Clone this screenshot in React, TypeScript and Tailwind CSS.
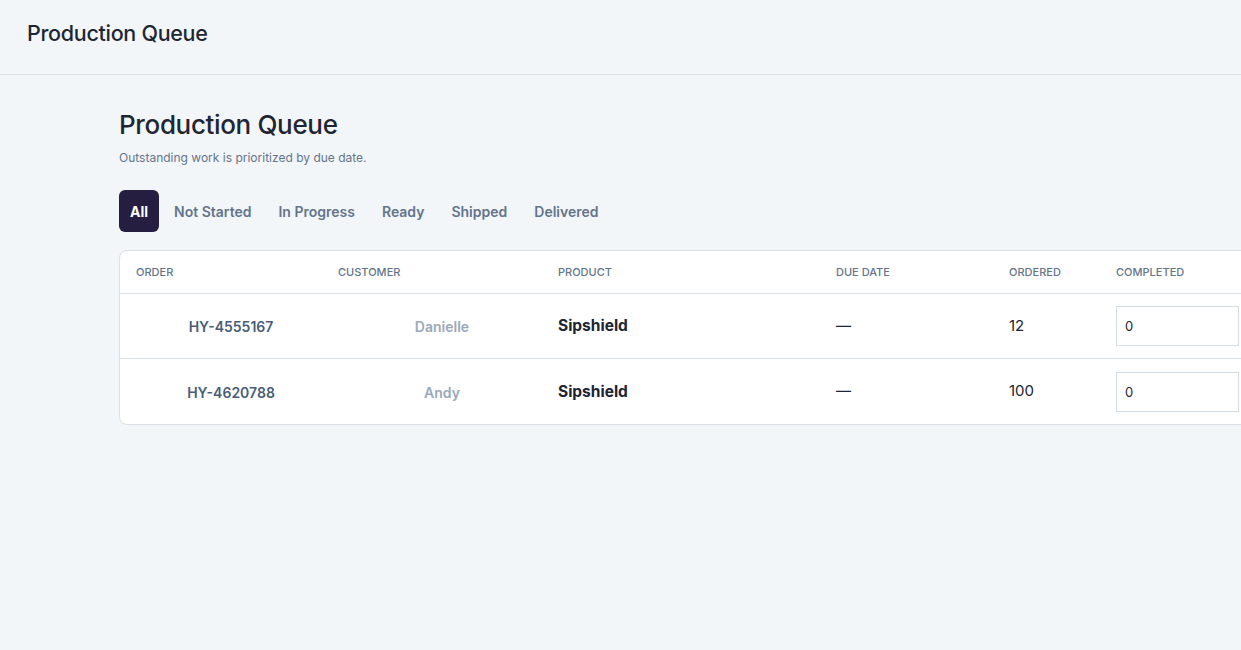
import {useState} from 'react';

type Order = {
    id: string;
    customer: string;
    product: string;
    due: string;
    ordered: number;
};

const orders: Order[] = [
    {id: 'HY-4555167', customer: 'Danielle', product: 'Sipshield', due: '—', ordered: 12},
    {id: 'HY-4620788', customer: 'Andy', product: 'Sipshield', due: '—', ordered: 100},
];

const tabs = ['All', 'Not Started', 'In Progress', 'Ready', 'Shipped', 'Delivered'];

const cols = 'grid grid-cols-[202px_220px_278px_173px_107px_200px]';

export default function App() {
    const [active, setActive] = useState('All');
    const [done, setDone] = useState<Record<string, string>>({});

    return (
        <div className="min-h-screen w-full overflow-hidden bg-[#f3f6f9] text-[#1e2433] font-['Inter',sans-serif]">
            <header className="h-[75px] border-b border-[#dbe1e8] flex items-center px-[27px] pb-[8px]">
                <h2 className="text-[21.5px] font-medium tracking-[-0.3px] text-[#1f2633]">Production Queue</h2>
            </header>

            <main className="pl-[119px] pt-[34px]">
                <h1 className="text-[26px] font-medium leading-[32px] tracking-[-0.35px] text-[#1f2633]">Production Queue</h1>
                <p className="mt-[8px] text-[12px] text-[#64748b]">Outstanding work is prioritized by due date.</p>

                <nav className="mt-[23px] flex items-center gap-[3px]">
                    {tabs.map((t) => (
                        <button
                            key={t}
                            onClick={() => setActive(t)}
                            className={
                                active === t
                                    ? 'h-[42px] px-[11px] rounded-md bg-[#261e40] text-white text-[14px] font-bold'
                                    : 'h-[42px] px-[12px] rounded-md text-[#64748b] text-[14px] font-semibold'
                            }
                        >
                            {t}
                        </button>
                    ))}
                </nav>

                <div className="mt-[18px] w-[1240px] bg-white border border-[#d9e0e8] rounded-lg">
                    <div className={`${cols} h-[43px] items-center border-b border-[#d9e0e8] text-[11px] font-medium uppercase text-[#64748b]`}>
                        <div className="pl-4">Order</div>
                        <div className="pl-4">Customer</div>
                        <div className="pl-4">Product</div>
                        <div className="pl-4">Due Date</div>
                        <div className="pl-4">Ordered</div>
                        <div className="pl-4">Completed</div>
                    </div>

                    {orders.map((o, i) => (
                        <div
                            key={o.id}
                            className={`${cols} h-[65px] items-center ${i < orders.length - 1 ? 'border-b border-[#d9e0e8]' : ''}`}
                        >
                            <div className="pl-9 pr-4 pt-px text-center text-[14px] font-semibold text-[#4a5d78]">{o.id}</div>
                            <div className="pl-9 pr-4 pt-px text-center text-[14px] font-semibold text-[#9aa8bb]">{o.customer}</div>
                            <div className="pl-4 text-[15.5px] font-bold text-[#1e2433]">{o.product}</div>
                            <div className="pl-4 text-[15px] text-[#1e2433]">{o.due}</div>
                            <div className="pl-4 text-[15px] text-[#1e2433]">{o.ordered}</div>
                            <div className="pl-4">
                                <input
                                    type="number"
                                    value={done[o.id] ?? '0'}
                                    onChange={(e) => setDone({...done, [o.id]: e.target.value})}
                                    className="w-[123px] h-[40px] border border-[#d4dce6] bg-white px-[8px] text-[13px] text-[#1e2433] outline-none"
                                />
                            </div>
                        </div>
                    ))}
                </div>
            </main>
        </div>
    );
}
